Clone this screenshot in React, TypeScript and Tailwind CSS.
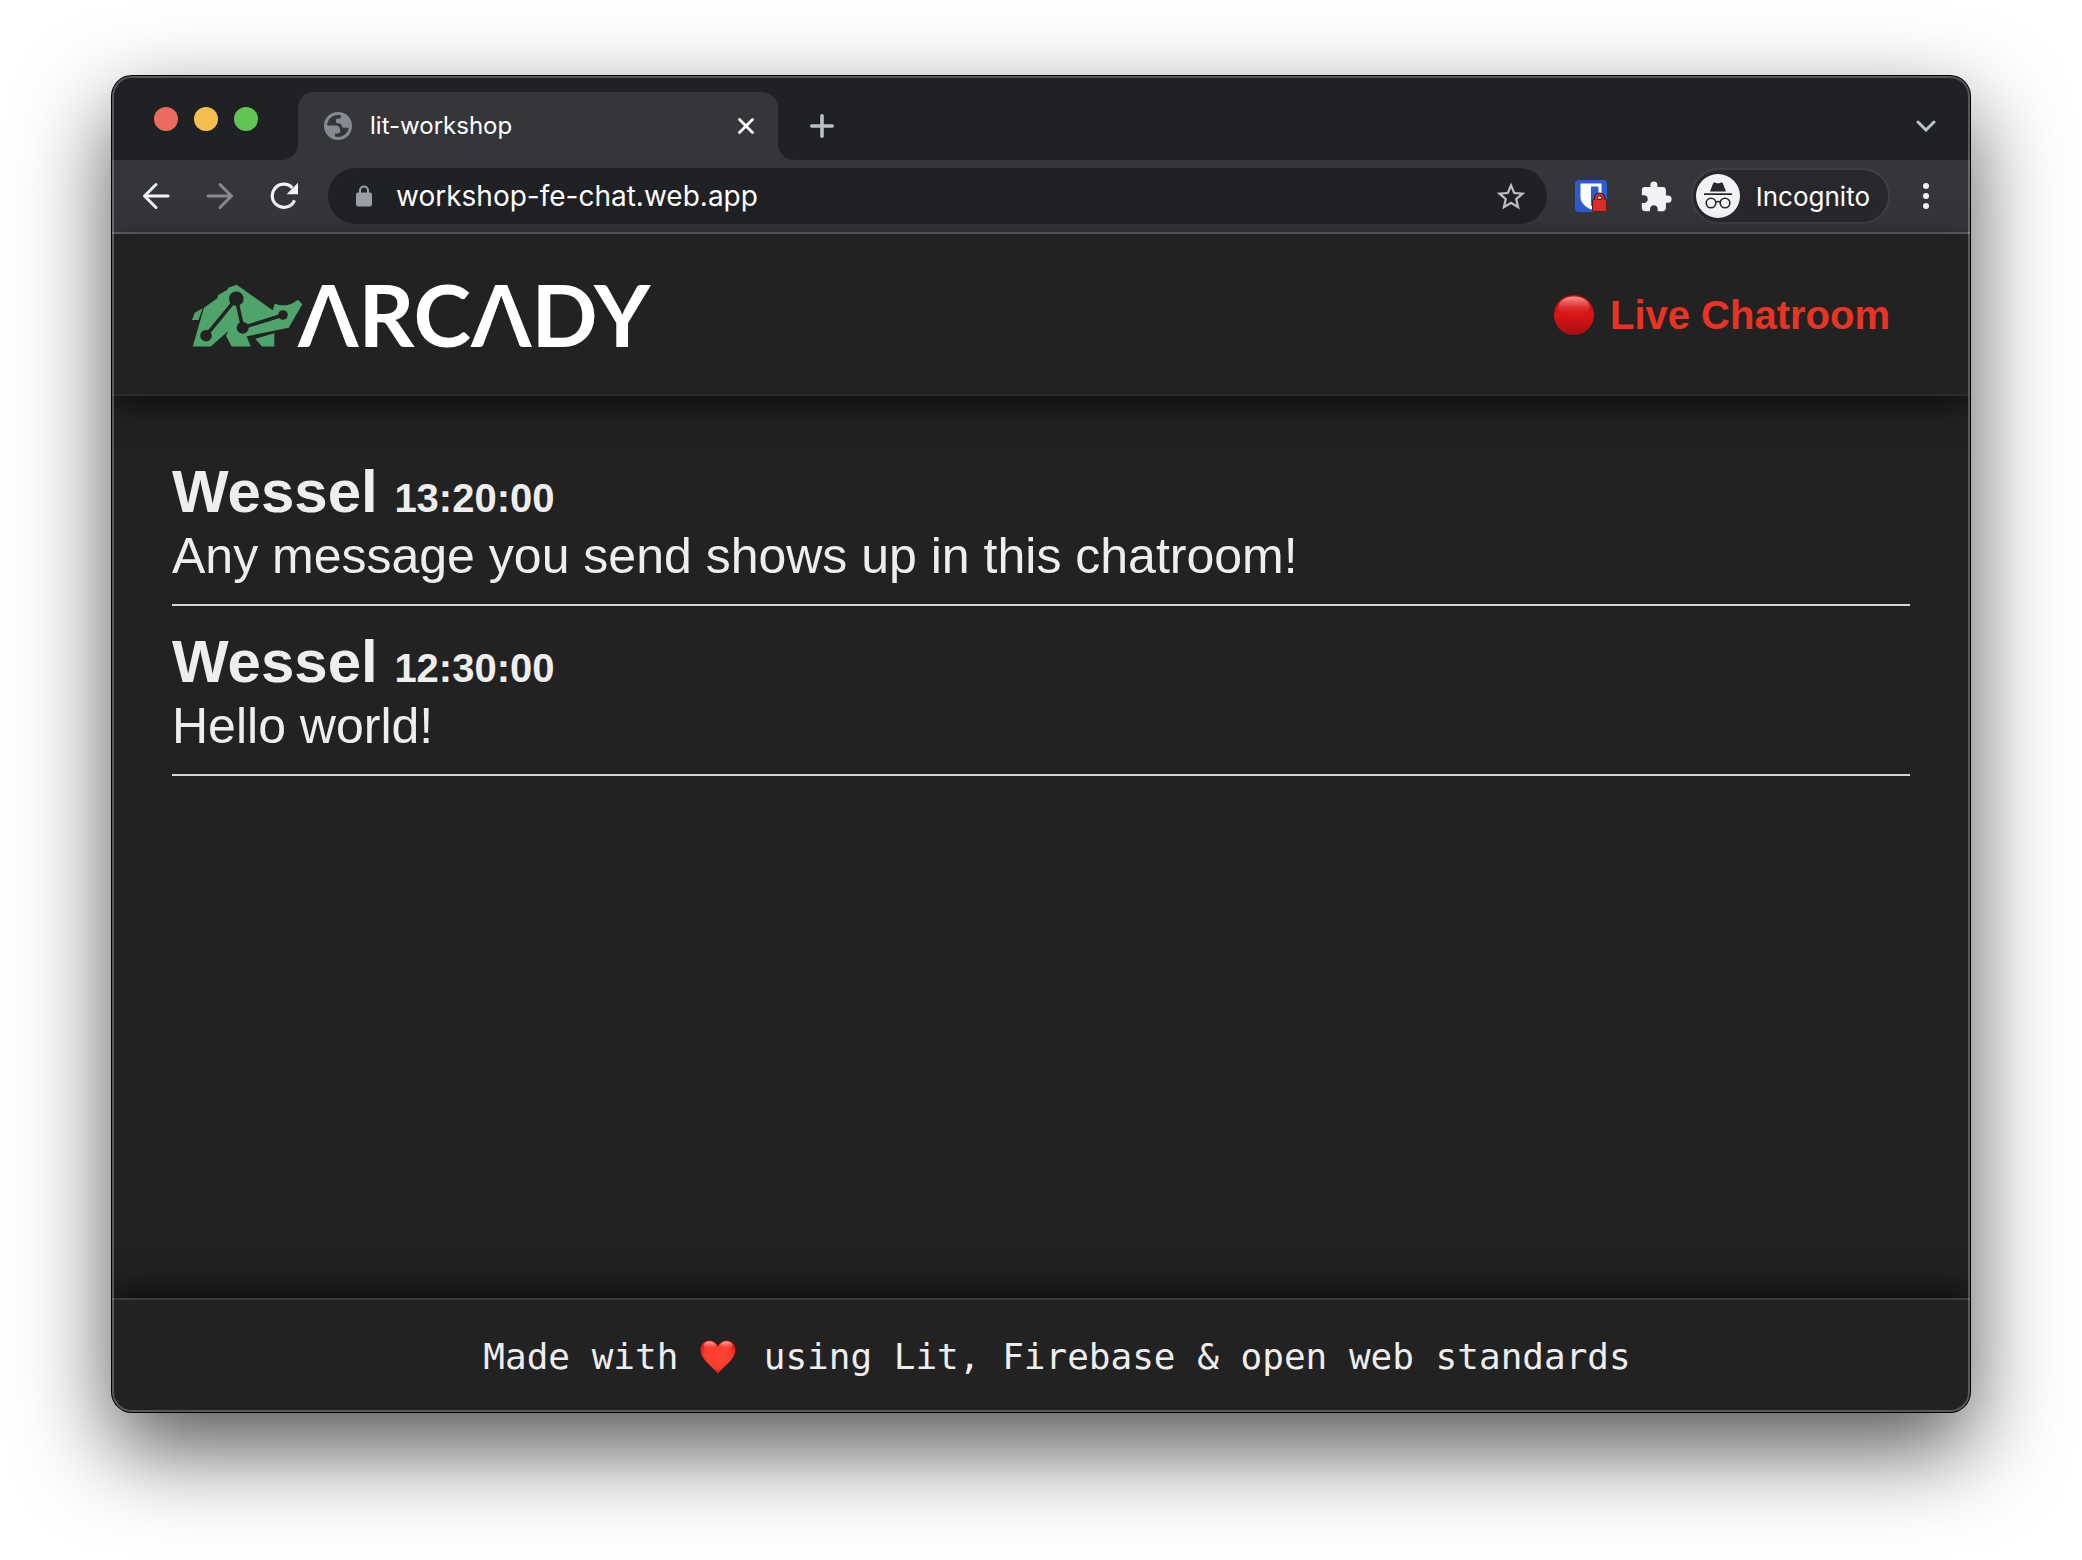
import React from "react";
import { MdExtension } from "react-icons/md";

function TrafficLights() {
  return (
    <div className="flex gap-4 pt-[31px]">
      <button aria-label="Close window" className="size-6 rounded-full bg-[#ed6a5e]" />
      <button aria-label="Minimize window" className="size-6 rounded-full bg-[#f5bf4f]" />
      <button aria-label="Zoom window" className="size-6 rounded-full bg-[#61c554]" />
    </div>
  );
}

function Globe() {
  return (
    <svg aria-hidden="true" viewBox="0 0 28 28" className="size-7">
      <circle cx="14" cy="14" r="14" fill="#868b92" />
      <path
        d="M3 13.600C3.300 7.600 8 3 14 3c1.200 0 2.200.1 3.200.4 0 2.200-1.300 3.400-3 3.400h-2.100v2.600c0 1.300.7 2 2 2h1.600c1.400 0 1.700 1 1.900 2 .3 1.500 1.300 2.400 3 2.400h4.300A11.200 11.200 0 0 1 11 24.600v-3.200h3c1.500 0 2.200-.8 2.200-2.200 0-3.600-2-5.600-5.400-5.600Z"
        fill="#35363a"
      />
    </svg>
  );
}

function TabStrip() {
  return (
    <div className="flex h-[84px] items-stretch bg-[#202124] pr-8 pl-[42px]">
      <TrafficLights />
      <div className="relative mt-4 ml-10 flex w-[480px] items-center rounded-t-2xl bg-[#35363a] pr-4 pl-[26px]">
        <svg aria-hidden="true" viewBox="0 0 16 16" className="absolute bottom-0 -left-4 size-4">
          <path d="M16 0v16H0A16 16 0 0 0 16 0Z" fill="#35363a" />
        </svg>
        <svg aria-hidden="true" viewBox="0 0 16 16" className="absolute -right-4 bottom-0 size-4">
          <path d="M0 0v16h16A16 16 0 0 1 0 0Z" fill="#35363a" />
        </svg>
        <Globe />
        <span className="ml-[18px] flex-1 text-2xl text-white">lit-workshop</span>
        <button aria-label="Close tab" className="grid size-8 place-items-center">
          <svg viewBox="0 0 16 16" className="size-4">
            <path d="M1.500 1.500l13 13M14.500 1.500l-13 13" stroke="#fff" strokeWidth="2.800" strokeLinecap="round" />
          </svg>
        </button>
      </div>
      <button aria-label="New tab" className="mt-4 ml-7 grid w-8 place-items-center">
        <svg viewBox="0 0 24 24" className="size-6">
          <path d="M12 1.800v20.400M1.800 12h20.400" stroke="#bdc1c6" strokeWidth="3.600" strokeLinecap="round" />
        </svg>
      </button>
      <button aria-label="Search tabs" className="mt-4 ml-auto grid w-6 place-items-center">
        <svg viewBox="0 0 20 12" className="h-3 w-5">
          <path d="M2 2l8 8 8-8" fill="none" stroke="#bdc1c6" strokeWidth="3" strokeLinecap="round" />
        </svg>
      </button>
    </div>
  );
}

function Toolbar() {
  return (
    <div className="flex h-[74px] items-center border-b-2 border-[#5f6164] bg-[#35363a] pr-8 pl-7">
      <button aria-label="Back" className="grid size-8 place-items-center">
        <svg viewBox="0 0 28 28" className="size-7">
          <path d="M26 14H2.500M14 2.500 2.500 14 14 25.500" fill="none" stroke="#f1f3f4" strokeWidth="3" strokeLinecap="round" strokeLinejoin="round" />
        </svg>
      </button>
      <button aria-label="Forward" className="ml-8 grid size-8 place-items-center">
        <svg viewBox="0 0 28 28" className="size-7">
          <path d="M2 14h23.500M14 2.500 25.500 14 14 25.500" fill="none" stroke="#88898b" strokeWidth="3" strokeLinecap="round" strokeLinejoin="round" />
        </svg>
      </button>
      <button aria-label="Reload" className="ml-8 grid size-8 place-items-center">
        <svg viewBox="0 0 28 28" className="size-7">
          <path d="M24.500 18.300A11.600 11.600 0 1 1 22.300 5.800" fill="none" stroke="#f1f3f4" strokeWidth="3.200" />
          <path d="M28 .8v11.400H16.600Z" fill="#f1f3f4" />
        </svg>
      </button>
      <div className="ml-7 flex h-14 flex-1 items-center rounded-full bg-[#202124] pr-5 pl-7">
        <svg aria-hidden="true" viewBox="0 0 16 22" className="h-[22px] w-4">
          <path d="M4 9V5.500a4 4 0 0 1 8 0V9" fill="none" stroke="#9aa0a6" strokeWidth="2" />
          <rect y="7.500" width="16" height="14" rx="2" fill="#9aa0a6" />
        </svg>
        <input aria-label="Address" defaultValue="workshop-fe-chat.web.app" className="ml-6 min-w-0 flex-1 bg-transparent text-[28px] text-white outline-none" />
        <button aria-label="Bookmark this tab" className="grid size-8 place-items-center text-[#bdbdbf]">
          <svg viewBox="1.500 1.500 21 20" className="size-[30px]">
            <path fill="currentColor" d="m22 9.240-7.190-.62L12 2 9.190 8.630 2 9.240l5.460 4.730L5.820 21 12 17.270 18.180 21l-1.630-7.030L22 9.240ZM12 15.400l-3.760 2.270 1-4.280-3.320-2.880 4.380-.38L12 6.100l1.710 4.040 4.380.38-3.320 2.880 1 4.280L12 15.400Z" />
          </svg>
        </button>
      </div>
      <button aria-label="Password manager, locked" className="ml-7 size-8">
        <svg viewBox="0 0 32 32" className="size-8">
          <rect width="32" height="32" rx="4" fill="#2b5cd3" />
          <path d="M5.500 3.500h21v13.500c0 6-5 10-10.500 12.500C10.500 27 5.500 23 5.500 17Z" fill="#fff" />
          <path d="M16 6.500h7.500V17c0 4-3.500 7-7.500 9Z" fill="#2b5cd3" />
          <path d="M20.500 20.500v-2a4 4 0 0 1 8 0v2Z" fill="#fff" stroke="#3a1a1c" strokeWidth="4" />
          <rect x="17.500" y="19.500" width="14" height="12" rx="1.500" fill="#d9302c" stroke="#5e1a1d" />
          <path d="M20.800 20v-1.700a3.700 3.700 0 0 1 7.400 0V20" fill="none" stroke="#d9302c" strokeWidth="2" />
        </svg>
      </button>
      <button aria-label="Extensions" className="ml-8 grid size-8 place-items-center text-[#f1f3f4]">
        <MdExtension className="size-[34px]" />
      </button>
      <button className="ml-5 flex h-14 items-center rounded-full border-2 border-[#3f3f44] bg-[#28282c] pr-[18px] pl-[3px] text-[26px] text-white">
        <svg aria-hidden="true" viewBox="0 0 44 44" className="size-11">
          <circle cx="22" cy="22" r="22" fill="#f1f3f4" />
          <path d="M14 17.500 17.200 9.300c.3-.8 1-1 1.700-.7l3.100 1 3.100-1c.7-.3 1.400-.1 1.700.7L30 17.500Z" fill="#28282c" />
          <path d="M8 20.200h28" stroke="#28282c" strokeWidth="1.800" />
          <circle cx="15" cy="29" r="4.800" fill="none" stroke="#28282c" strokeWidth="1.600" />
          <circle cx="29" cy="29" r="4.800" fill="none" stroke="#28282c" strokeWidth="1.600" />
          <path d="M19.500 28.500q2.500-2 5 0" fill="none" stroke="#28282c" strokeWidth="1.600" />
        </svg>
        <span className="ml-4">Incognito</span>
      </button>
      <button aria-label="Menu" className="ml-6 grid w-6 place-items-center">
        <svg viewBox="0 0 6 28" className="h-7 w-[6px]" fill="#f1f3f4">
          <circle cx="3" cy="4" r="3" />
          <circle cx="3" cy="14" r="3" />
          <circle cx="3" cy="24" r="3" />
        </svg>
      </button>
    </div>
  );
}

function Logo() {
  return (
    <svg role="img" aria-label="Arcady" viewBox="0 0 462 66" className="h-[66px] w-[462px] overflow-visible">
      <g fill="#4fa46c">
        <path d="M.7 64.500 12 25.700l13.300-9.400 1-3.300 9-5.300 1-2 8.400-3 36 25.600 2-6.600 5.300 1.600h6.700l5-1.600 6.300-4 4.300 4.600L96.700 45.700l-42 8.600 4 10.200h-19L34 53.700l2.300-4.700L18.700 64.500Z" />
        <path d="M10.700 26.300 2.700 30.700 0 38h6.500Z" />
        <path d="M63.300 56.700 82.300 51.300v13.200H70Z" />
      </g>
      <path d="M14 53.700 44.300 16.700 50.700 45.700 91 33" fill="none" stroke="#222" strokeWidth="3.500" />
      <g fill="#222">
        <circle cx="14" cy="53.700" r="5.800" />
        <circle cx="44.300" cy="16.700" r="7.300" />
        <circle cx="50.700" cy="45.700" r="6" />
        <circle cx="91" cy="33" r="4.800" />
      </g>
      <text x="106" y="64.500" fontFamily="Lato" fontWeight="700" fontSize="87" fill="#fff">
        ARCADY
      </text>
      <g fill="#222">
        <path d="M136.300 14 155 65h-37.400Z" />
        <path d="M309.300 14 328 65h-37.400Z" />
      </g>
    </svg>
  );
}

function RedDot() {
  return (
    <svg aria-hidden="true" viewBox="0 0 40 40" className="size-10">
      <defs>
        <linearGradient id="dot-base" x1="0" y1="0" x2="0" y2="1">
          <stop offset="0" stopColor="#c80d10" />
          <stop offset=".5" stopColor="#d81416" />
          <stop offset="1" stopColor="#a50f12" />
        </linearGradient>
        <linearGradient id="dot-shine" x1="0" y1="0" x2="0" y2="1">
          <stop offset="0" stopColor="#ff9a9a" />
          <stop offset="1" stopColor="#dc1517" stopOpacity="0" />
        </linearGradient>
      </defs>
      <circle cx="20" cy="20" r="20" fill="url(#dot-base)" />
      <ellipse cx="20" cy="12" rx="15.500" ry="10.500" fill="url(#dot-shine)" />
    </svg>
  );
}

function Heart() {
  return (
    <svg role="img" aria-label="love" viewBox="0 0 36 34" className="mr-[6px] h-[34px] w-9">
      <defs>
        <radialGradient id="heart-fill" cx=".5" cy=".45" r=".6">
          <stop offset="0" stopColor="#ff4436" />
          <stop offset=".65" stopColor="#fb3a2c" />
          <stop offset="1" stopColor="#c80c06" />
        </radialGradient>
        <linearGradient id="heart-shine" x1="0" y1="0" x2="0" y2="1">
          <stop offset="0" stopColor="#ffb9b0" />
          <stop offset="1" stopColor="#ff4436" stopOpacity="0" />
        </linearGradient>
      </defs>
      <path d="M18 34C14 27 .5 20 .5 10 .5 4 4.500.5 9.200.5 13.500.5 17 3.500 18 7c1-3.500 4.500-6.500 8.800-6.500 4.700 0 8.700 3.500 8.700 9.500C35.500 20 22 27 18 34Z" fill="url(#heart-fill)" />
      <ellipse cx="9.500" cy="5.500" rx="6" ry="4" fill="url(#heart-shine)" />
      <ellipse cx="26.500" cy="5.500" rx="6" ry="4" fill="url(#heart-shine)" />
    </svg>
  );
}

const messages = [
  { author: "Wessel", time: "13:20:00", text: "Any message you send shows up in this chatroom!" },
  { author: "Wessel", time: "12:30:00", text: "Hello world!" },
];

export default function App() {
  return (
    <div className="flex min-h-screen flex-col bg-white px-28 pt-[76px] pb-[148px] font-['Inter',sans-serif]">
      <div className="relative flex flex-1 flex-col overflow-hidden rounded-[20px] bg-[#222] shadow-[0_0_0_1px_#000,0_36px_90px_rgba(0,0,0,0.68)]">
        <TabStrip />
        <Toolbar />
        <div className="flex flex-1 flex-col font-['Liberation_Sans',Arial,sans-serif] text-[#eee]">
          <header className="relative flex h-[162px] items-center justify-between border-b-2 border-[#2b2b2b] bg-[#222] px-20 pt-[2px] shadow-[0_10px_30px_rgba(0,0,0,0.6)]">
            <Logo />
            <h1 className="flex items-center gap-4 text-[40px] font-bold text-[#e93323]">
              <RedDot />
              Live Chatroom
            </h1>
          </header>
          <main className="flex-1 px-[60px] pt-[62px]">
            <ul>
              {messages.map((m) => (
                <li key={m.time} className="mb-[22px] border-b-2 border-[#d5d5d5] pb-[18px]">
                  <h2 className="text-[60px] leading-[68px] font-bold">
                    {m.author} <time className="text-[40px] leading-none">{m.time}</time>
                  </h2>
                  <p className="text-[50px] leading-[60px]">{m.text}</p>
                </li>
              ))}
            </ul>
          </main>
          <footer className="relative flex h-[114px] items-center justify-center border-t-2 border-[#3c3c3c] bg-[#222] pt-[2px] pl-8 font-['DejaVu_Sans_Mono',monospace] text-4xl shadow-[0_-10px_30px_rgba(0,0,0,0.6)]">
            <p className="flex items-center whitespace-pre">
              <span>Made with </span>
              <Heart />
              <span> using Lit, Firebase &amp; open web standards</span>
            </p>
          </footer>
        </div>
        <div className="pointer-events-none absolute inset-0 rounded-[20px] border-2 border-white/25" />
      </div>
    </div>
  );
}
